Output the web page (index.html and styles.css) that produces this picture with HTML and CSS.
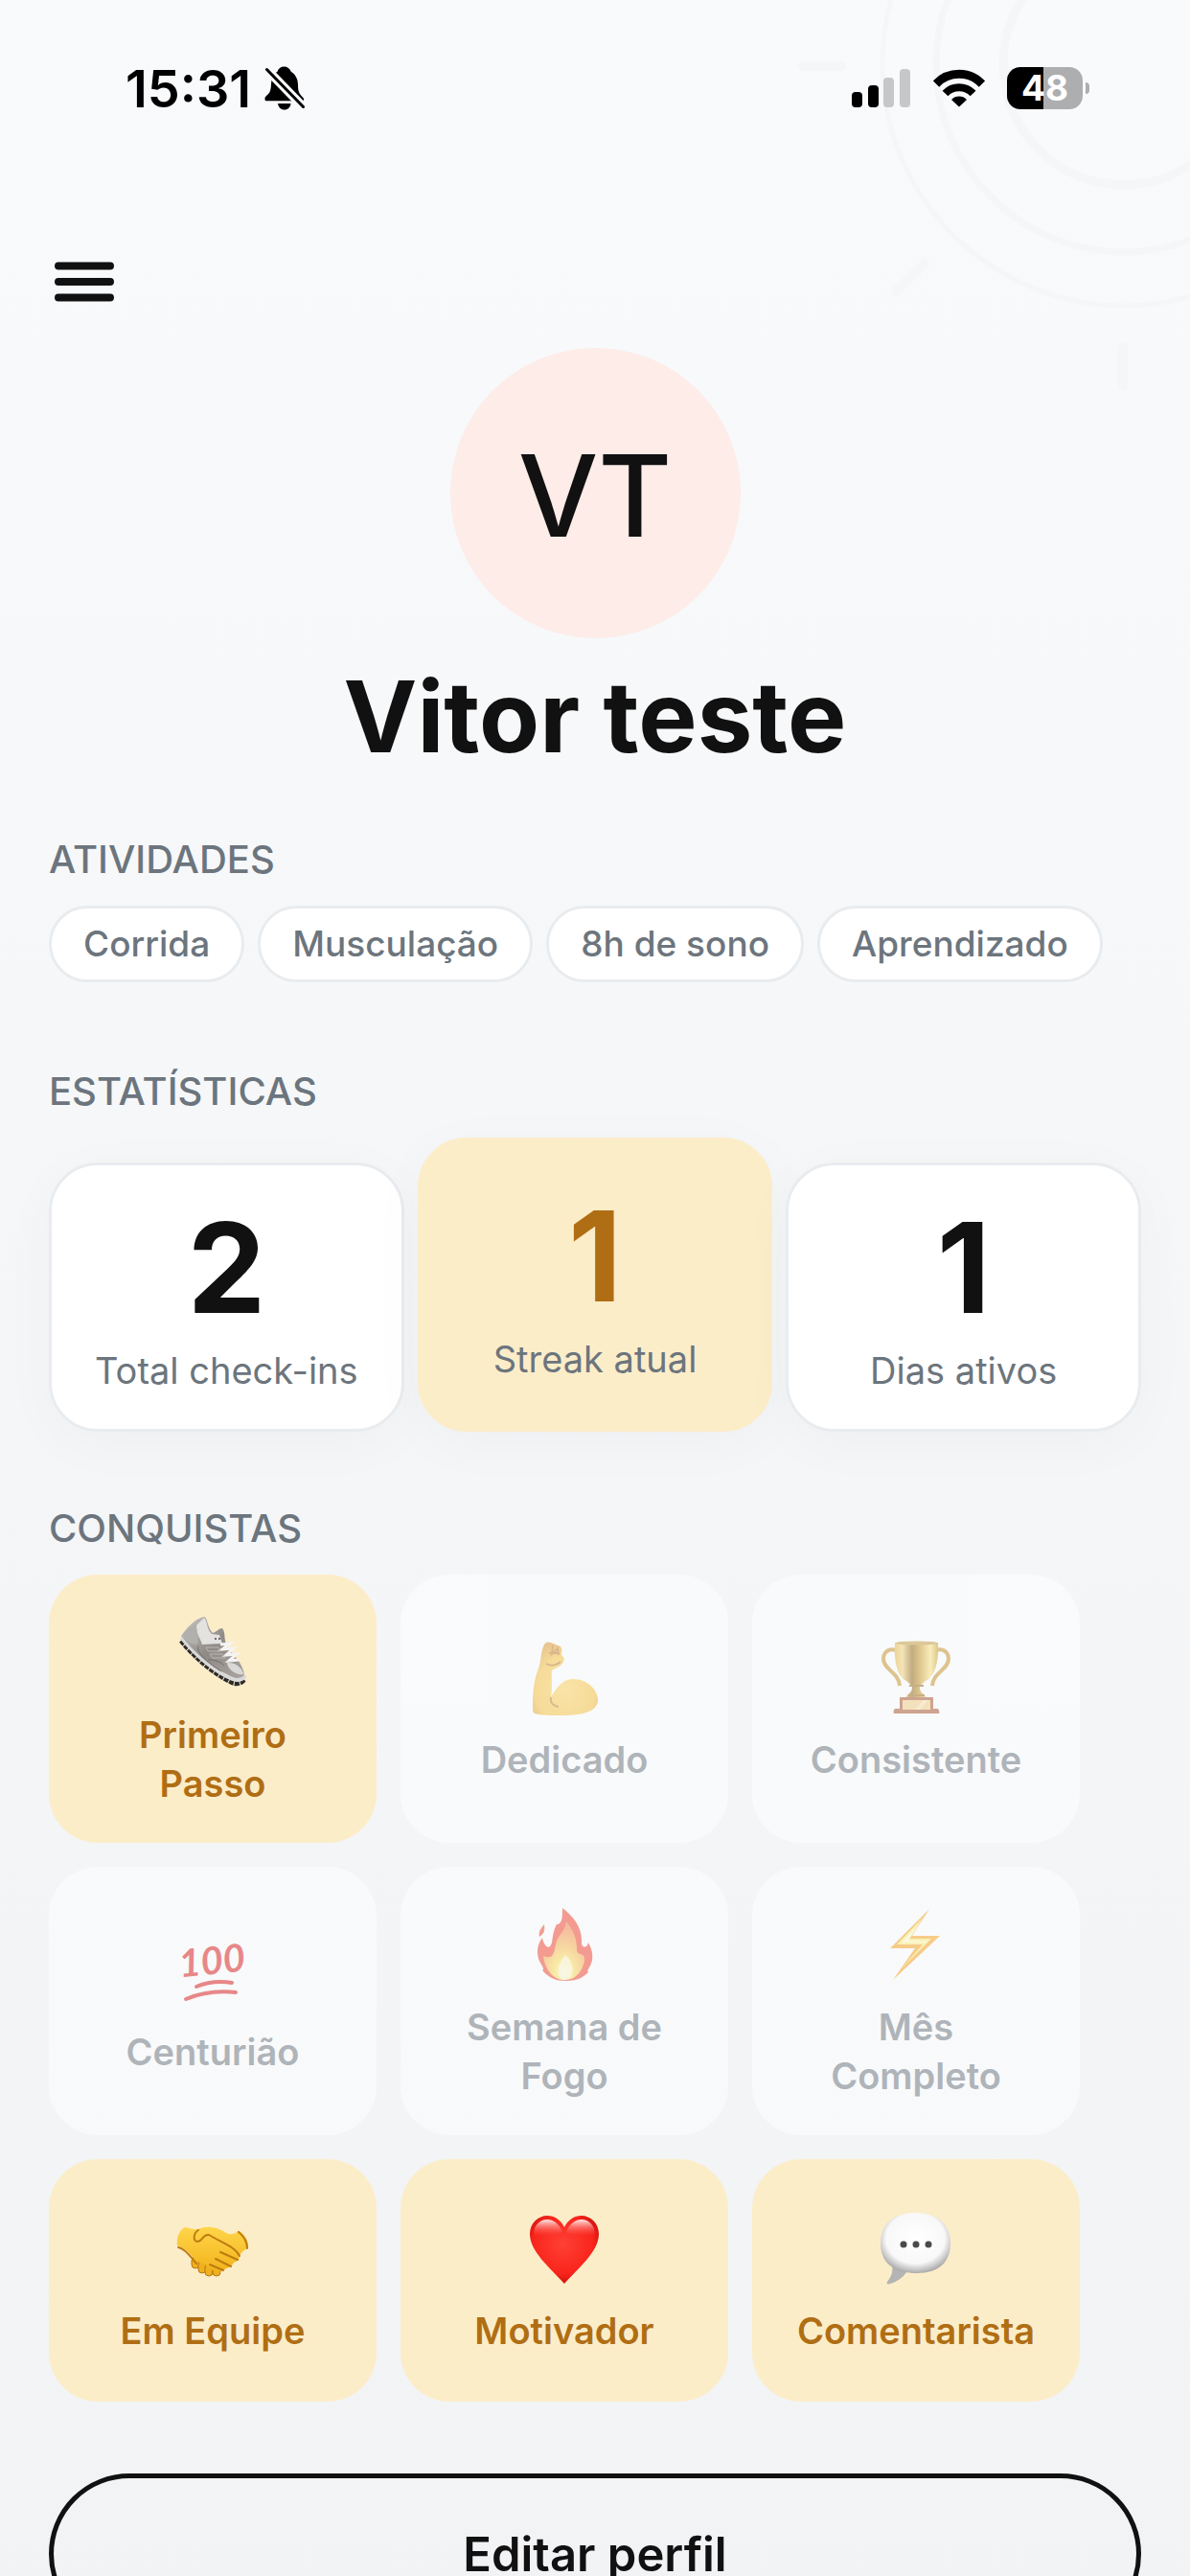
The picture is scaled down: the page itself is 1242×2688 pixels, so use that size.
FILE: index.html
```html
<!DOCTYPE html>
<html lang="pt-BR">

<head>
   <meta charset="UTF-8">
   <meta name="viewport" content="width=device-width, initial-scale=1.0">
   <title>Perfil</title>
   <link rel="stylesheet" href="styles.css">
</head>

<body>
   <div class="screen">
      <svg class="bg-rings" width="420" height="420" viewBox="0 0 420 420" aria-hidden="true">
         <g fill="none" stroke="#f4f6f7" stroke-linecap="round">
            <circle cx="351" cy="67" r="126" stroke-width="9" />
            <circle cx="351" cy="67" r="196" stroke-width="7" />
            <circle cx="351" cy="67" r="252" stroke-width="5" />
            <path d="M16 69h40M113 304l30-29M350 362v41" stroke-width="10" />
         </g>
      </svg>

      <div class="status-bar">
         <div class="status-left">
            <span class="time">15:31</span>
            <svg width="42" height="46" viewBox="0 0 42 46" aria-hidden="true">
               <path d="M20.500 .5c3.500 0 6 2 7.200 5.200 5 3 7.300 8 7.300 14.300 0 6.500 1.500 9 5 12.500 2.200 2.500 1 3.800-1.500 3.800H2.500C-.2 36.300-.2 33 2 31c4-3.500 4.500-5 5-12C7.500 12 9 8.500 13.500 5.700 14.500 2.500 17 .5 20.500.5z" />
               <path d="M14 39h13.500c-.5 4-3 6.500-6.700 6.500S14.500 43 14 39z" />
               <path d="M2.500 3.500 40.500 42.500" stroke="#f9fafc" stroke-width="9" />
               <path d="M2.500 3.500 40.500 42.500" stroke="#000" stroke-width="3" stroke-linecap="round" />
            </svg>
         </div>
         <div class="status-right">
            <svg width="62" height="40" viewBox="0 0 62 40" aria-hidden="true">
               <rect y="24" width="11" height="16" rx="4" />
               <rect x="17" y="17" width="11" height="23" rx="4" />
               <rect x="33" y="9" width="11" height="31" rx="4" fill="#c6c7c9" />
               <rect x="50" width="11" height="40" rx="4" fill="#c6c7c9" />
            </svg>
            <svg width="54" height="40" viewBox="0 0 54 40" aria-hidden="true">
               <g fill="none" stroke="#000">
                  <path d="M3 15.500A33.500 33.500 0 0 1 51 15.500" stroke-width="9" />
                  <path d="M12.500 25.500A20 20 0 0 1 41.500 25.500" stroke-width="8" />
               </g>
               <path d="M27 39.500 19 32a11 11 0 0 1 16 0z" />
            </svg>
            <div class="battery"><span>48</span></div>
         </div>
      </div>

      <header>
         <button class="menu-btn" type="button" aria-label="Menu">
            <svg width="62" height="42" viewBox="0 0 62 42">
               <path d="M4 4.500h54M4 21h54M4 37.500h54" stroke="#111" stroke-width="8" stroke-linecap="round" />
            </svg>
         </button>
      </header>

      <main>
         <div class="profile">
            <div class="avatar">VT</div>
            <h1>Vitor teste</h1>
         </div>

         <section>
            <h2>ATIVIDADES</h2>
            <ul class="chips">
               <li>Corrida</li>
               <li>Musculação</li>
               <li>8h de sono</li>
               <li>Aprendizado</li>
            </ul>
         </section>

         <section class="stats-section">
            <h2>ESTATÍSTICAS</h2>
            <div class="stats">
               <div class="stat">
                  <p class="number">2</p>
                  <p class="label">Total check-ins</p>
               </div>
               <div class="stat streak">
                  <p class="number">1</p>
                  <p class="label">Streak atual</p>
               </div>
               <div class="stat">
                  <p class="number">1</p>
                  <p class="label">Dias ativos</p>
               </div>
            </div>
         </section>

         <section>
            <h2>CONQUISTAS</h2>
            <div class="badges">
               <div class="badge unlocked">
                  <svg viewBox="0 0 90 90" aria-hidden="true">
                     <defs>
                        <linearGradient id="shoe" x1="0" y1="0" x2="1" y2="1">
                           <stop offset="0" stop-color="#c9c7c4" />
                           <stop offset=".5" stop-color="#8f8a86" />
                           <stop offset="1" stop-color="#a9a4a0" />
                        </linearGradient>
                     </defs>
                     <path d="M12 33c14 17 32 33 52 43 5 3 11 2 14-3" fill="none" stroke="#2d2b2b" stroke-width="5" stroke-dasharray="5 1" />
                     <path d="M13 29c14 17 32 34 53 43 5 2 10 1 12-3" fill="none" stroke="#d9d9d9" stroke-width="6" />
                     <path d="M12 28c5-7 14-18 24-20 4 1 3 11 9 17 4-1 6-5 10-5 4 5 1 12 5 18 4 8 17 18 18 31-5 5-12 3-18-1C42 60 25 44 12 28z" fill="url(#shoe)" />
                     <path d="M28 17 36 9c4 4 2 11 8 17l8 1 3 9-21 1c-2-7-6-10-6-20z" fill="#e3e2e0" />
                     <path d="M14 28c3-6 8-10 14-12 0 9 3 14 1 21-6 0-11-3-15-9z" fill="#b2b0ad" />
                     <path d="M60 56c8-1 16 5 17 12-6 2-17-5-17-12z" fill="#dad8d6" />
                     <path d="m53 37 10-1-8 6 12-1-8 7 11-1-8 7 10-1" fill="none" stroke="#f5f4f3" stroke-width="3" />
                     <path d="M38 40h13l2 4H40zM42 47h13l3 4H45z" fill="none" stroke="#bbb7b3" />
                     <path d="M30 39c-3 8 17 22 24 26M40 53c8 0 13 2 17 6" fill="none" stroke="#77716e" />
                     <circle cx="48" cy="31" r="1" fill="#444" />
                     <circle cx="52" cy="31" r="1" fill="#444" />
                  </svg>
                  <p>Primeiro Passo</p>
               </div>

               <div class="badge">
                  <svg viewBox="0 0 90 90" aria-hidden="true">
                     <defs>
                        <radialGradient id="arm" cx=".5" cy=".65" r=".65">
                           <stop offset="0" stop-color="#ffd35a" />
                           <stop offset=".7" stop-color="#f9c23c" />
                           <stop offset="1" stop-color="#e29a2d" />
                        </radialGradient>
                     </defs>
                     <path d="M12 77c0-16 1-28 6-41 3-8 2-16 6-25 2-3 4-3 7-2l10 4c2 3 1 6 1 9 5 4 2 8-1 11l-9 5c-1 8 1 18-1 28 6-10 12-19 23-19 15 0 26 11 26 22 0 14-23 16-37 16-10 0-22 0-29-2-2-1-2-3-2-6z" fill="url(#arm)" />
                     <path d="M31 66c-1 7 3 9 8 10M26 31c5 3 11 2 15-2M29 20h11M33 12l-1 9 6-6 1 7" fill="none" stroke="#c27b24" stroke-width="2" />
                  </svg>
                  <p>Dedicado</p>
               </div>

               <div class="badge">
                  <svg viewBox="0 0 90 90" aria-hidden="true">
                     <defs>
                        <linearGradient id="cup">
                           <stop offset="0" stop-color="#e7b63d" />
                           <stop offset=".18" stop-color="#f5d376" />
                           <stop offset=".4" stop-color="#926311" />
                           <stop offset=".55" stop-color="#c48f1d" />
                           <stop offset=".82" stop-color="#ffe680" />
                           <stop offset="1" stop-color="#c99b20" />
                        </linearGradient>
                     </defs>
                     <g fill="none" stroke="#c79425" stroke-width="4">
                        <path d="M28 22c-4-9-17-7-17 4 0 11 16 14 17 28" />
                        <path d="M62 22c4-9 17-7 17 4 0 11-16 14-17 28" />
                     </g>
                     <path d="M23 9h45c1 20-3 35-13 40-3 3-6 4-6 7 0 7 7 6 7 13H34c0-7 7-6 7-13 0-3-3-4-6-7C25 44 22 28 23 9z" fill="url(#cup)" />
                     <ellipse cx="45.500" cy="9.500" rx="22" ry="2" fill="#c49a3a" />
                     <path d="M28 66h35v12h5c1 2 2 3 1 5H22c-1-2 0-4 1-5h5z" fill="#a9542d" />
                     <path d="M31 69h29v10H31z" fill="#f3cf83" />
                     <path d="M44 79 53 69h5l-9 10z" fill="#fbe4ad" />
                     <path d="M38 54h15M37 64h17" stroke="#9b6b13" stroke-width="2" />
                  </svg>
                  <p>Consistente</p>
               </div>

               <div class="badge">
                  <svg viewBox="0 0 90 90" aria-hidden="true">
                     <text class="hundred" x="45" y="50" text-anchor="middle" transform="rotate(-6 45 45)">100</text>
                     <path d="M28 63c12-5 24-6 37-4M17 76c17-7 33-9 52-7" fill="none" stroke="#dc1c1c" stroke-width="4" stroke-linecap="round" />
                  </svg>
                  <p>Centurião</p>
               </div>

               <div class="badge">
                  <svg viewBox="0 0 90 90" aria-hidden="true">
                     <defs>
                        <radialGradient id="core" cx=".5" cy=".86" r=".75">
                           <stop offset="0" stop-color="#fffbd0" />
                           <stop offset=".25" stop-color="#ffe65c" />
                           <stop offset=".6" stop-color="#fbb84e" />
                           <stop offset="1" stop-color="#f98549" />
                        </radialGradient>
                     </defs>
                     <path d="M43 7c12 9 21 21 20 36 0 6 6 6 7 0 5 9 6 18 1 26-2 3-2 4-1 5-5 5-11 9-23 9-11 0-18-3-25-11 2 0 1-3-1-6-6-9-5-20 1-28 1 7 7 15 10 5 1-8 2-14 5-19 6 0 6-8 6-17z" fill="#f4442e" />
                     <path d="M47 21c8 10 11 18 11 29 0 8 9 2 8 12-2 9-7 20-21 20-11 0-20-10-22-25 12 5 11-5 14-16 4-8 9-11 10-20z" fill="url(#core)" />
                     <path d="M24 24c1 6 0 10-5 13-1-6 1-8 5-13z" fill="#ee4d35" />
                     <path d="M46 56c8 6 10 18 5 24-4 3-8 3-11-1-4-8 1-17 6-23z" fill="#fffbe0" opacity=".7" />
                  </svg>
                  <p>Semana de Fogo</p>
               </div>

               <div class="badge">
                  <svg viewBox="0 0 90 90" aria-hidden="true">
                     <path d="M59 8 18 49h26L21 82l49-46H41z" fill="#f9a41e" />
                     <path d="M55 14 25 45h27L29 71l32-32H35z" fill="#fff07a" />
                     <path d="M51 20 30 43h26L40 59l17-17-20-1z" fill="#fffbc4" />
                  </svg>
                  <p>Mês Completo</p>
               </div>

               <div class="badge unlocked">
                  <svg viewBox="0 0 90 90" aria-hidden="true">
                     <defs>
                        <linearGradient id="hand" x1="0" y1="0" x2="0" y2="1">
                           <stop offset="0" stop-color="#ffd54a" />
                           <stop offset="1" stop-color="#f2b31b" />
                        </linearGradient>
                     </defs>
                     <g fill="#eeb01f" stroke="#b97710">
                        <rect x="23" y="54" width="8" height="12" rx="4" />
                        <rect x="30" y="58" width="8" height="13" rx="4" />
                        <rect x="37" y="61" width="8" height="13" rx="4" />
                        <rect x="45" y="61" width="8" height="13" rx="4" />
                     </g>
                     <path d="M16 23c6 1 9 3 14 2 9-4 19-3 29 4 6 3 9 0 14-2 6 4 10 11 9 18-4 2-7 3-9 8 0 5-4 6-6 7-3 5-7 5-9 7-7 5-14 1-21-5-5-3-7-2-10-4-4-6-9-12-19-16-1-8 2-16 8-19z" fill="url(#hand)" />
                     <path d="M30 26c-5 3-6 12-1 12 6 0 5-8 12-7 13 8 27 12 32 22M53 49l18 8M48 56l16 8M42 62l14 6M9 44c9 2 14 12 19 17M72 28c6 5 9 10 9 17" fill="none" stroke="#bd7c0f" stroke-width="2" stroke-linecap="round" />
                  </svg>
                  <p>Em Equipe</p>
               </div>

               <div class="badge unlocked">
                  <svg viewBox="0 0 90 90" aria-hidden="true">
                     <defs>
                        <radialGradient id="heart" cx=".48" cy=".42" r=".62">
                           <stop offset="0" stop-color="#ff4034" />
                           <stop offset=".7" stop-color="#f9251c" />
                           <stop offset="1" stop-color="#c40c08" />
                        </radialGradient>
                        <linearGradient id="shine" x1="0" y1="0" x2="0" y2="1">
                           <stop offset="0" stop-color="#fff" stop-opacity=".9" />
                           <stop offset="1" stop-color="#ff5a50" stop-opacity="0" />
                        </linearGradient>
                     </defs>
                     <path d="M45 82C31 66 9 49 9 30 9 11 34 2 45 23 56 2 81 11 81 30 81 49 59 66 45 82z" fill="url(#heart)" />
                     <path d="M13 31c0-18 22-23 30-3-9 5-20 5-30 3zM77 31c0-18-22-23-30-3 9 5 20 5 30 3z" fill="url(#shine)" />
                  </svg>
                  <p>Motivador</p>
               </div>

               <div class="badge unlocked">
                  <svg viewBox="0 0 90 90" aria-hidden="true">
                     <defs>
                        <radialGradient id="bubble" cx=".5" cy=".42" r=".6">
                           <stop offset="0" stop-color="#fff" />
                           <stop offset=".7" stop-color="#f8f8f8" />
                           <stop offset="1" stop-color="#a3a3a3" />
                        </radialGradient>
                     </defs>
                     <path d="M19 60c3 7 1 14-4 20-1 2 0 3 3 2 7-2 12-5 18-13z" fill="#b4b4b4" />
                     <path d="M45 8c22 0 36 12 36 32S68 71 46 71C24 71 8 62 8 40S23 8 45 8z" fill="url(#bubble)" />
                     <circle cx="32" cy="41" r="3.500" fill="#4a4a4a" />
                     <circle cx="45" cy="41" r="3.500" fill="#4a4a4a" />
                     <circle cx="58" cy="41" r="3.500" fill="#4a4a4a" />
                  </svg>
                  <p>Comentarista</p>
               </div>
            </div>
         </section>

         <button class="edit-btn" type="button">Editar perfil</button>
      </main>
   </div>
</body>

</html>
```

FILE: styles.css
```css
* {
   margin: 0;
   padding: 0;
   box-sizing: border-box;
}

body {
   font-family: Inter, "Noto Sans", sans-serif;
   color: #111;
}

button {
   font-family: inherit;
   color: inherit;
   background: none;
   border: none;
   cursor: pointer;
}

.screen {
   position: relative;
   height: 100vh;
   overflow: hidden;
   background: linear-gradient(#f9fafc, #f1f3f5);
}

.bg-rings {
   position: absolute;
   top: 0;
   right: 0;
}

/* status bar */
.status-bar {
   position: relative;
   display: flex;
   justify-content: space-between;
   align-items: center;
   height: 184px;
   padding: 0 112px 0 131px;
}

.status-left,
.status-right {
   display: flex;
   align-items: center;
}

.status-left {
   gap: 14px;
   color: #000;
}

.status-right {
   gap: 23px;
}

.time {
   font-size: 54px;
   font-weight: 600;
}

.battery {
   position: relative;
   width: 79px;
   height: 44px;
   border-radius: 14px;
   background: linear-gradient(90deg, #000 48%, #adaeb0 48%);
   color: #fff;
   font-size: 37px;
   font-weight: 700;
   line-height: 44px;
   text-align: center;
}

.battery::after {
   content: "";
   position: absolute;
   top: 16px;
   right: -7px;
   width: 4px;
   height: 12px;
   border-radius: 0 6px 6px 0;
   background: #adaeb0;
}

/* header */
header {
   position: relative;
   padding: 89px 57px 48px;
}

.menu-btn {
   display: flex;
}

main {
   display: flex;
   flex-direction: column;
   padding: 0 51px;
   gap: 75px;
}

.profile {
   display: flex;
   flex-direction: column;
   align-items: center;
   gap: 34px;
}

.avatar {
   width: 303px;
   height: 303px;
   border-radius: 50%;
   background: #fdece8;
   font-size: 118px;
   font-weight: 500;
   line-height: 309px;
   text-align: center;
}

h1 {
   font-size: 103px;
   font-weight: 700;
   line-height: 96px;
}

h2 {
   margin-bottom: 23px;
   color: #6c757d;
   font-size: 40px;
   font-weight: 500;
   line-height: 51px;
}

/* atividades */
.chips {
   display: flex;
   flex-wrap: wrap;
   gap: 14px;
   list-style: none;
}

.chips li {
   padding: 0 33px;
   border: 3px solid #e9ecef;
   border-radius: 40px;
   background: #fff;
   color: #6c757d;
   font-size: 37px;
   font-weight: 500;
   line-height: 74px;
}

/* estatisticas */
.stats-section {
   margin-top: 13px;
}

.stats {
   display: flex;
   align-items: flex-end;
   gap: 14px;
}

.stat {
   flex: 1;
   padding: 42px 0 35px;
   border: 3px solid #e9ecef;
   border-radius: 51px;
   background: #fff;
   box-shadow: 0 12px 60px rgba(0, 0, 0, 0.03);
   text-align: center;
}

.stat.streak {
   padding: 56px 0 47px;
   border-color: #fcedc9;
   background: #fcedc9;
}

.number {
   margin-bottom: 17px;
   font-size: 130px;
   font-weight: 700;
   line-height: 130px;
}

.streak .number {
   color: #b06e14;
}

.label {
   color: #6c757d;
   font-size: 38px;
   line-height: 51px;
}

/* conquistas */
.badges {
   display: flex;
   flex-wrap: wrap;
   gap: 25px;
}

.badge {
   display: flex;
   flex-direction: column;
   align-items: center;
   justify-content: center;
   width: 30%;
   min-height: 253px;
   padding: 36px 42px;
   border-radius: 51px;
   background: #fff;
   color: #6c757d;
   font-size: 38px;
   font-weight: 600;
   line-height: 51px;
   text-align: center;
   opacity: 0.5;
}

.badge.unlocked {
   background: #fcedc9;
   color: #b06e14;
   opacity: 1;
}

.badge svg {
   width: 90px;
   height: 90px;
   margin-bottom: 16px;
}

.hundred {
   fill: #dc1c1c;
   font-family: Lato, sans-serif;
   font-size: 40px;
   font-style: italic;
   font-weight: 700;
}

.edit-btn {
   height: 168px;
   flex-shrink: 0;
   border: 5px solid #111;
   border-radius: 84px;
   font-size: 49px;
   font-weight: 600;
}
```
